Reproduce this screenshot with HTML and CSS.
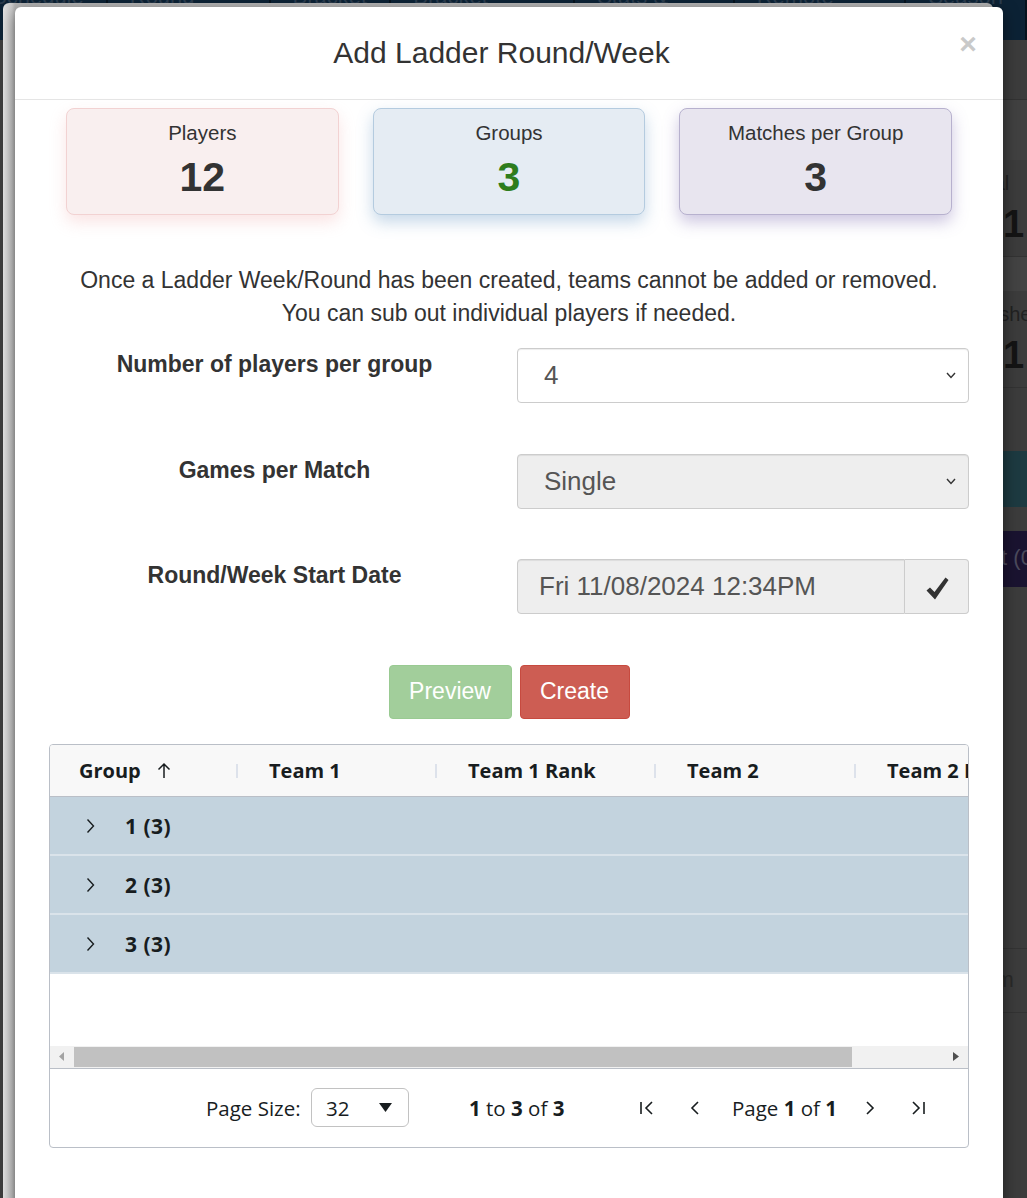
FILE: index.html
```html
<!DOCTYPE html>
<html lang="en">
<head>
    <meta charset="UTF-8">
    <title>Add Ladder Round/Week</title>
    <link rel="stylesheet" href="styles.css">
</head>
<body>
    <div class="page">
        <nav class="topnav">
            <span class="nav-item first">Schedule</span>
            <span class="nav-item">Round Robin</span>
            <span class="nav-item">Bracket</span>
            <span class="nav-item">Bracket Control</span>
            <span class="nav-item">Stats &amp; Logs</span>
            <span class="nav-item">Remote Mode</span>
            <span class="nav-item">Season</span>
        </nav>
        <div class="page-side">
            <div class="side-head"></div>
            <div class="side-card">
                <div class="side-label">Total</div>
                <div class="side-num">1</div>
            </div>
            <div class="side-gap"></div>
            <div class="side-card">
                <div class="side-label">Finished</div>
                <div class="side-num">1</div>
            </div>
            <div class="side-btn"></div>
            <div class="side-band">List (0)</div>
            <div class="side-rows">
                <div class="side-row">Team</div>
                <div class="side-row bold">Add</div>
            </div>
        </div>
    </div>

    <div class="modal-back"></div>

    <div class="modal">
        <div class="modal-header">
            <h4 class="modal-title">Add Ladder Round/Week</h4>
            <button class="close" type="button">&times;</button>
        </div>

        <div class="modal-body">
            <div class="stats">
                <div class="stat-col">
                    <div class="stat-card players">
                        <div class="stat-label">Players</div>
                        <div class="stat-value">12</div>
                    </div>
                </div>
                <div class="stat-col">
                    <div class="stat-card groups">
                        <div class="stat-label">Groups</div>
                        <div class="stat-value green">3</div>
                    </div>
                </div>
                <div class="stat-col">
                    <div class="stat-card matches">
                        <div class="stat-label">Matches per Group</div>
                        <div class="stat-value">3</div>
                    </div>
                </div>
            </div>

            <p class="notice">
                Once a Ladder Week/Round has been created, teams cannot be added or removed.<br>
                You can sub out individual players if needed.
            </p>

            <div class="form-row">
                <label class="form-label">Number of players per group</label>
                <div class="select-box">
                    <span>4</span>
                    <svg class="chev" width="10" height="7" viewBox="0 0 10 7"><polyline points="1,1 5,5.5 9,1" fill="none" stroke="#333" stroke-width="1.4"/></svg>
                </div>
            </div>

            <div class="form-row">
                <label class="form-label">Games per Match</label>
                <div class="select-box disabled">
                    <span>Single</span>
                    <svg class="chev" width="10" height="7" viewBox="0 0 10 7"><polyline points="1,1 5,5.5 9,1" fill="none" stroke="#333" stroke-width="1.4"/></svg>
                </div>
            </div>

            <div class="form-row">
                <label class="form-label">Round/Week Start Date</label>
                <div class="input-group">
                    <div class="date-input">Fri 11/08/2024 12:34PM</div>
                    <div class="addon">
                        <svg width="23" height="23" viewBox="0 0 23 23"><polygon points="0.5,13.5 4,10.5 8.5,15 19.5,0.5 22.5,3 9,22.5" fill="#333"/></svg>
                    </div>
                </div>
            </div>

            <div class="actions">
                <button class="btn btn-preview" type="button">Preview</button>
                <button class="btn btn-create" type="button">Create</button>
            </div>

            <div class="grid">
                <div class="grid-header">
                    <div class="hcell c1">Group
                        <svg class="sort" width="14" height="17" viewBox="0 0 14 17"><path d="M7 2 V16 M1.5 7.5 L7 2 L12.5 7.5" fill="none" stroke="#181d1f" stroke-width="1.5"/></svg>
                        <span class="resize"></span>
                    </div>
                    <div class="hcell c2">Team 1<span class="resize"></span></div>
                    <div class="hcell c3">Team 1 Rank<span class="resize"></span></div>
                    <div class="hcell c4">Team 2<span class="resize"></span></div>
                    <div class="hcell c5">Team 2 Rank</div>
                </div>

                <div class="grid-body">
                    <div class="group-row">
                        <svg class="expand" width="9" height="16" viewBox="0 0 9 16"><polyline points="1.5,1.5 7.5,8 1.5,14.5" fill="none" stroke="#181d1f" stroke-width="1.4"/></svg>
                        <span class="group-name">1 (3)</span>
                    </div>
                    <div class="group-row">
                        <svg class="expand" width="9" height="16" viewBox="0 0 9 16"><polyline points="1.5,1.5 7.5,8 1.5,14.5" fill="none" stroke="#181d1f" stroke-width="1.4"/></svg>
                        <span class="group-name">2 (3)</span>
                    </div>
                    <div class="group-row">
                        <svg class="expand" width="9" height="16" viewBox="0 0 9 16"><polyline points="1.5,1.5 7.5,8 1.5,14.5" fill="none" stroke="#181d1f" stroke-width="1.4"/></svg>
                        <span class="group-name">3 (3)</span>
                    </div>
                </div>

                <div class="hscroll">
                    <span class="arrow"><svg width="6" height="9" viewBox="0 0 6 9"><polygon points="5,0 0,4.5 5,9" fill="#a3a3a3"/></svg></span>
                    <div class="track"><div class="thumb"></div></div>
                    <span class="arrow"><svg width="6" height="9" viewBox="0 0 6 9"><polygon points="0,0 6,4.5 0,9" fill="#505050"/></svg></span>
                </div>

                <div class="paging">
                    <span class="page-size-label">Page Size:</span>
                    <div class="page-size">
                        <span>32</span>
                        <svg width="13" height="9" viewBox="0 0 13 9"><polygon points="0,0 13,0 6.5,9" fill="#181d1f"/></svg>
                    </div>
                    <span class="row-summary"><b>1</b> to <b>3</b> of <b>3</b></span>
                    <div class="pager">
                        <svg class="pg-icon" width="16" height="16" viewBox="0 0 16 16"><path d="M2 2 V14 M13 2 L7 8 L13 14" fill="none" stroke="#181d1f" stroke-width="1.6"/></svg>
                        <svg class="pg-icon" width="14" height="16" viewBox="0 0 14 16"><path d="M10 2 L4 8 L10 14" fill="none" stroke="#181d1f" stroke-width="1.6"/></svg>
                        <span class="page-text">Page <b>1</b> of <b>1</b></span>
                        <svg class="pg-icon" width="14" height="16" viewBox="0 0 14 16"><path d="M4 2 L10 8 L4 14" fill="none" stroke="#181d1f" stroke-width="1.6"/></svg>
                        <svg class="pg-icon" width="16" height="16" viewBox="0 0 16 16"><path d="M3 2 L9 8 L3 14 M14 2 V14" fill="none" stroke="#181d1f" stroke-width="1.6"/></svg>
                    </div>
                </div>
            </div>
        </div>
    </div>
</body>
</html>
```

FILE: styles.css
```css
* {
    box-sizing: border-box;
}

body {
    margin: 0;
    height: 1198px;
    overflow: hidden;
    background-color: #3c3c3c;
    font-family: "Liberation Sans", Arial, sans-serif;
    color: #333;
}

/* dimmed page behind the dialog */
.page {
    position: relative;
}

.topnav {
    display: flex;
    height: 40px;
    background-color: #0c2235;
    overflow: hidden;
}

.nav-item {
    display: block;
    margin-top: -14px;
    padding: 0 22px;
    font-size: 22px;
    line-height: 22px;
    color: #2b3c4d;
    border-right: 2px solid #06121d;
}

.nav-item.first {
    margin-left: -30px;
}

.page-side {
    width: 40px;
    margin-left: 987px;
    overflow: hidden;
    white-space: nowrap;
}

.side-head {
    height: 60px;
    border-bottom: 1px solid #323232;
}

.side-head + .side-card {
    border-top: 60px solid #414141;
}

.side-card {
    padding: 12px 0 10px 0;
    border-bottom: 1px solid #333;
}

.side-label {
    font-size: 20px;
    color: #222;
    text-indent: -20px;
}

.side-num {
    margin-top: 8px;
    margin-left: 16px;
    font-size: 38px;
    font-weight: bold;
    color: #141414;
}

.side-gap {
    height: 34px;
    background-color: #434343;
}

.side-btn {
    height: 56px;
    margin: 63px 0 24px 0;
    background-color: #1d3a41;
}

.side-band {
    height: 56px;
    padding-top: 14px;
    background-color: #1a1330;
    font-size: 22px;
    color: #4b4a5c;
    text-indent: -14px;
}

.side-rows {
    margin-top: 361px;
}

.side-row {
    height: 64px;
    padding-top: 18px;
    border-top: 1px solid #333;
    font-size: 22px;
    color: #2a2a2a;
    text-indent: -27px;
}

.side-row.bold {
    padding-top: 30px;
    font-weight: bold;
    color: #111;
}

/* stacked dialog edges */
.modal-back {
    position: absolute;
    left: 3px;
    top: 3px;
    width: 990px;
    height: 1300px;
    border-radius: 6px;
    background: linear-gradient(to right, #e2e2e2, #c9c9c9 9px, #b4b4b4 12px);
}

.modal {
    position: absolute;
    left: 15px;
    top: 7px;
    width: 988px;
    height: 1260px;
    background-color: #fff;
    border-radius: 6px;
    box-shadow: 0 5px 15px rgba(0, 0, 0, 0.5);
}

.modal-header {
    display: flex;
    height: 93px;
    padding: 0 25px 0 30px;
    border-bottom: 1px solid #e5e5e5;
}

.modal-title {
    flex: 1;
    margin: 0;
    align-self: center;
    text-align: center;
    font-size: 30px;
    font-weight: normal;
    color: #333;
}

.close {
    width: 20px;
    margin-top: 22px;
    align-self: flex-start;
    padding: 0;
    border: none;
    background: none;
    font-family: "Liberation Sans", Arial, sans-serif;
    font-size: 30px;
    font-weight: bold;
    line-height: 30px;
    color: #c9c9c9;
}

.modal-body {
    padding: 8px 34px 0 34px;
}

/* summary cards */
.stats {
    display: grid;
    grid-template-columns: repeat(3, 1fr);
}

.stat-col {
    padding: 0 17px;
}

.stat-card {
    height: 107px;
    padding-top: 12px;
    border: 1px solid;
    border-radius: 8px;
    text-align: center;
}

.stat-card.players {
    background-color: #f9efef;
    border-color: #f2d2d2;
    box-shadow: 0 7px 16px rgba(238, 170, 170, 0.32);
}

.stat-card.groups {
    background-color: #e5ecf3;
    border-color: #b4cbdf;
    box-shadow: 0 7px 16px rgba(90, 140, 190, 0.35);
}

.stat-card.matches {
    background-color: #e8e5ef;
    border-color: #b7b1ce;
    box-shadow: 0 7px 16px rgba(110, 90, 165, 0.35);
}

.stat-label {
    font-size: 20.5px;
    line-height: 23px;
    color: #333;
}

.stat-value {
    margin-top: 10px;
    font-size: 41px;
    font-weight: bold;
    line-height: 46px;
    color: #333;
}

.stat-value.green {
    color: #2e7d1c;
}

.notice {
    margin: 49px 0 18px 0;
    text-align: center;
    font-size: 23px;
    line-height: 33px;
    color: #333;
}

/* form */
.form-row {
    display: grid;
    grid-template-columns: 451px 1fr;
    gap: 17px;
    margin-bottom: 50.5px;
}

.form-label {
    padding-top: 2px;
    text-align: center;
    font-size: 23px;
    font-weight: bold;
    line-height: 28px;
    color: #333;
}

.select-box {
    display: flex;
    align-items: center;
    justify-content: space-between;
    height: 55px;
    padding: 0 12px 0 26px;
    border: 1px solid #ccc;
    border-radius: 4px;
    background-color: #fff;
    box-shadow: inset 0 1px 1px rgba(0, 0, 0, 0.075);
    font-size: 26px;
    color: #555;
}

.select-box.disabled {
    background-color: #eee;
}

.input-group {
    display: flex;
    height: 55px;
}

.date-input {
    flex: 1;
    padding: 0 21px;
    border: 1px solid #ccc;
    border-radius: 4px 0 0 4px;
    background-color: #eee;
    box-shadow: inset 0 1px 1px rgba(0, 0, 0, 0.075);
    font-size: 26px;
    line-height: 53px;
    color: #555;
}

.addon {
    display: flex;
    align-items: center;
    justify-content: center;
    width: 64px;
    padding: 4px 0 0 2px;
    border: 1px solid #ccc;
    border-left: none;
    border-radius: 0 4px 4px 0;
    background-color: #eee;
}

.actions {
    display: flex;
    justify-content: center;
    gap: 8px;
    margin-bottom: 25px;
}

.btn {
    height: 54px;
    padding: 0 10px;
    border: 1px solid transparent;
    border-radius: 4px;
    font-family: "Liberation Sans", Arial, sans-serif;
    font-size: 23px;
    color: #fff;
}

.btn-preview {
    width: 123px;
    background-color: #a2ce9b;
    border-color: #99ca92;
}

.btn-create {
    width: 110px;
    background-color: #cd5d53;
    border-color: #c74a3f;
}

/* data grid */
.grid {
    height: 404px;
    border: 1px solid #babfc7;
    border-radius: 4px;
    overflow: hidden;
    font-family: "Open Sans", "Noto Sans", sans-serif;
    color: #181d1f;
}

.grid-header {
    display: flex;
    height: 52px;
    background-color: #f8f8f8;
    border-bottom: 1px solid #babfc7;
    white-space: nowrap;
    overflow: hidden;
}

.hcell {
    position: relative;
    display: flex;
    align-items: center;
    flex: none;
    padding-left: 29px;
    font-size: 20px;
    font-weight: bold;
}

.hcell.c1 { width: 190px; }
.hcell.c2 { width: 199px; }
.hcell.c3 { width: 219px; }
.hcell.c4 { width: 200px; }
.hcell.c5 { width: 200px; }

.sort {
    margin-left: 16px;
}

.resize {
    position: absolute;
    right: 2px;
    top: 19px;
    width: 2px;
    height: 14px;
    background-color: #dde2eb;
}

.grid-body {
    height: 249px;
}

.group-row {
    display: flex;
    align-items: center;
    height: 59px;
    padding: 2px 0 0 36px;
    background-color: #c3d3de;
    border-bottom: 2px solid #dae3ea;
}

.group-name {
    margin-left: 30px;
    font-size: 21px;
    font-weight: bold;
    letter-spacing: 0.5px;
}

.hscroll {
    display: flex;
    align-items: center;
    height: 23px;
    background-color: #f1f1f1;
    border-bottom: 1px solid #babfc7;
}

.arrow {
    display: flex;
    justify-content: center;
    width: 24px;
}

.track {
    flex: 1;
    height: 20px;
}

.thumb {
    width: 778px;
    height: 20px;
    background-color: #c1c1c1;
}

.paging {
    display: flex;
    align-items: center;
    height: 78px;
    padding-left: 156px;
    font-size: 20.5px;
}

.page-size-label {
    width: 105px;
}

.page-size {
    display: flex;
    align-items: center;
    justify-content: space-between;
    width: 98px;
    height: 39px;
    padding: 0 16px 0 14px;
    border: 1px solid #c2c2c2;
    border-radius: 6px;
}

.row-summary {
    width: 170px;
    margin-left: 60px;
}

.pager {
    display: flex;
    align-items: center;
}

.pg-icon + .pg-icon {
    margin-left: 33px;
}

.page-text {
    width: 131px;
    margin-left: 30px;
}

.page-text + .pg-icon {
    margin-left: 0;
}
```
